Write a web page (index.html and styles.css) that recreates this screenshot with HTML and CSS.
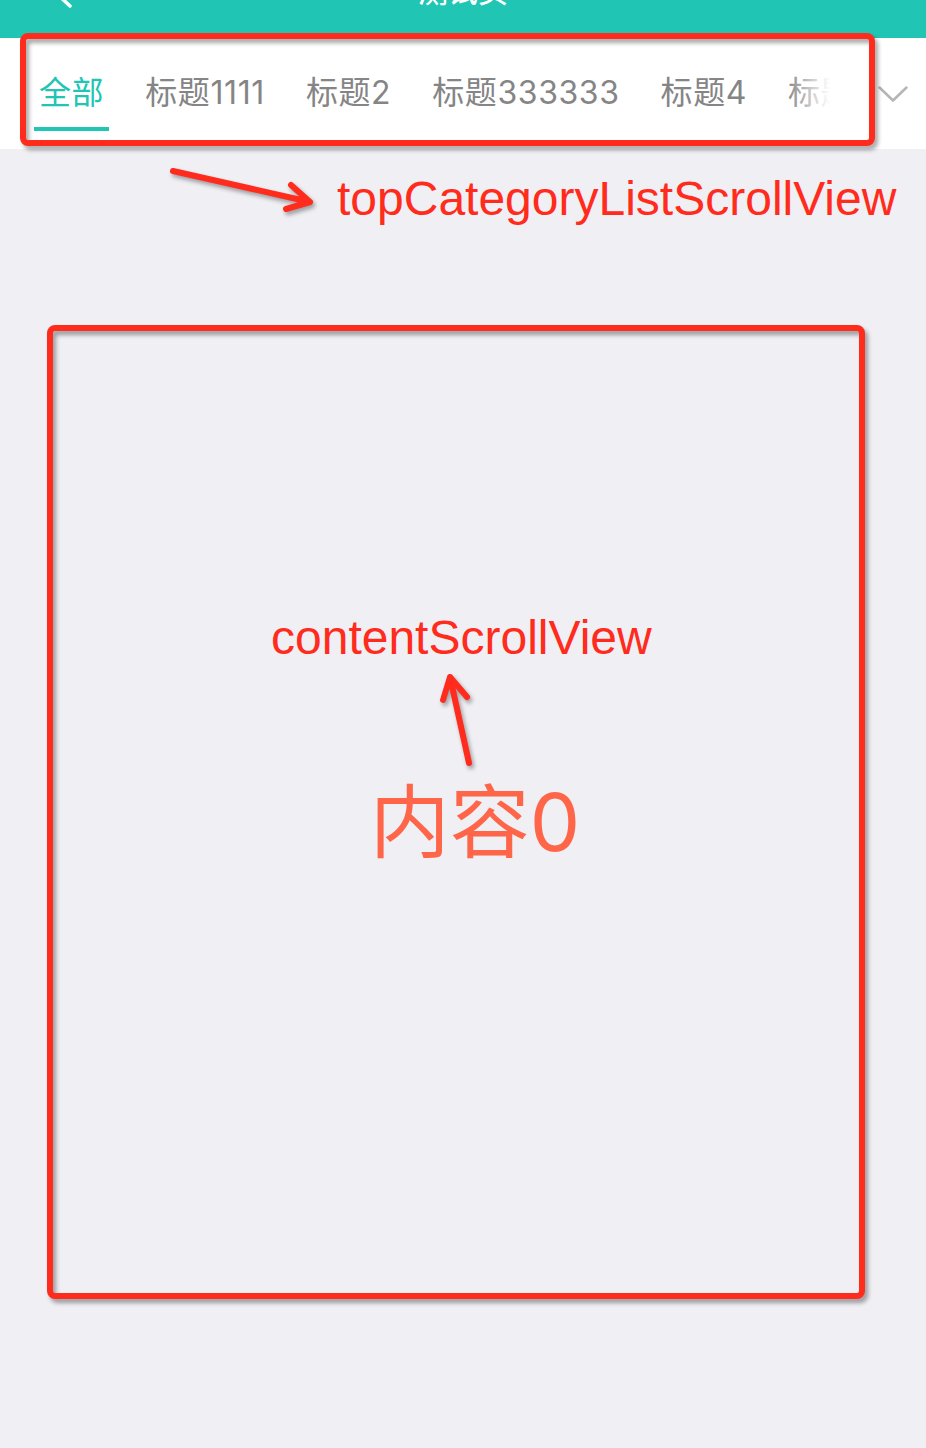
FILE: index.html
```html
<!DOCTYPE html>
<html lang="zh-CN">
<head>
    <meta charset="UTF-8">
    <meta name="viewport" content="width=device-width, initial-scale=1.0">
    <title>分类列表</title>
    <link rel="stylesheet" href="styles.css">
</head>
<body>
    <div class="screen">
        <!-- 导航栏 -->
        <header class="navbar">
            <span class="nav-back">
                <svg width="24" height="30" viewBox="0 0 24 30"><path d="M20 2 L6 15 L20 28" fill="none" stroke="#fff" stroke-width="3.5" stroke-linecap="round" stroke-linejoin="round"/></svg>
            </span>
            <h1 class="nav-title">测试页</h1>
            <span class="nav-side"></span>
        </header>

        <!-- 顶部分类 -->
        <nav class="category-bar">
            <div class="category-list">
                <a class="category active">全部</a>
                <a class="category">标题1111</a>
                <a class="category">标题2</a>
                <a class="category">标题333333</a>
                <a class="category">标题4</a>
                <a class="category">标题5</a>
                <a class="category">标题6</a>
            </div>
            <button class="category-more" type="button">
                <svg width="30" height="16" viewBox="0 0 30 16"><path d="M1.5 1.5 L15 14.5 L28.5 1.5" fill="none" stroke="#b5b5b5" stroke-width="2.5" stroke-linecap="round" stroke-linejoin="round"/></svg>
            </button>
        </nav>

        <!-- 内容 -->
        <main class="content">
            <p class="content-label">内容0</p>
        </main>

        <!-- 标注 -->
        <div class="notes">
            <div class="note-box note-box-top"></div>
            <div class="note-box note-box-content"></div>
            <svg class="note-arrows" width="926" height="1448" viewBox="0 0 926 1448">
                <path d="M173 171 L310 202 M291 185 L310 202 L286 209" />
                <path d="M469 763 L450 677 M443 700 L450 677 L467 697" />
            </svg>
            <span class="note-text note-text-top">topCategoryListScrollView</span>
            <span class="note-text note-text-content">contentScrollView</span>
        </div>
    </div>
</body>
</html>
```

FILE: styles.css
```css
/* 基础 */
body {
    margin: 0;
    background-color: #efeff4;
    font-family: Inter, "Noto Sans CJK SC", sans-serif;
}

.screen {
    position: relative;
    display: flex;
    flex-direction: column;
    width: 926px;
    height: 1448px;
    overflow: hidden;
}

/* 导航栏 */
.navbar {
    display: grid;
    grid-template-columns: 1fr auto 1fr;
    grid-template-rows: 100%;
    align-items: end;
    flex-shrink: 0;
    height: 38px;
    padding-bottom: 32px;
    box-sizing: border-box;
    overflow: hidden;
    background-color: #21c5b3;
    color: #fff;
}

.nav-back {
    display: flex;
    padding-left: 50px;
}

.nav-back svg {
    margin-bottom: -2px;
}

.nav-title {
    margin: 0;
    font-size: 30px;
    font-weight: 500;
    line-height: 1;
    white-space: nowrap;
}

/* 顶部分类 */
.category-bar {
    display: flex;
    flex-shrink: 0;
    height: 111px;
    background-color: #fff;
}

.category-list {
    position: relative;
    display: flex;
    align-items: flex-start;
    gap: 31px;
    flex: 1;
    min-width: 0;
    padding-left: 34px;
    overflow: hidden;
}

.category-list::after {
    content: "";
    position: absolute;
    top: 0;
    right: 0;
    bottom: 0;
    width: 44px;
    background: linear-gradient(to right, rgba(255, 255, 255, 0), #fff);
}

.category {
    flex-shrink: 0;
    padding: 39px 5px 18px;
    border-bottom: 4px solid transparent;
    font-size: 32px;
    line-height: 32px;
    letter-spacing: 0.6px;
    color: #858585;
    white-space: nowrap;
}

.category.active {
    color: #21c5b3;
    border-bottom-color: #21c5b3;
}

.category-more {
    display: flex;
    align-items: center;
    justify-content: flex-end;
    width: 96px;
    padding: 0 18px 0 0;
    border: none;
    background-color: #fff;
}

/* 内容 */
.content {
    display: flex;
    justify-content: center;
    flex: 1;
    padding: 633px 0 0 24px;
}

.content-label {
    margin: 0;
    font-size: 80px;
    line-height: 1;
    color: #ff6649;
}

/* 标注 */
.notes {
    position: absolute;
    inset: 0;
    pointer-events: none;
}

.note-box {
    position: absolute;
    border: 6px solid #ff2b1c;
    border-radius: 8px;
    box-sizing: border-box;
    filter: drop-shadow(3px 4px 2px rgba(0, 0, 0, 0.35));
}

.note-box-top {
    left: 20px;
    top: 33px;
    width: 855px;
    height: 113px;
}

.note-box-content {
    left: 47px;
    top: 325px;
    width: 818px;
    height: 974px;
}

.note-arrows {
    position: absolute;
    left: 0;
    top: 0;
    filter: drop-shadow(2px 3px 2px rgba(0, 0, 0, 0.35));
}

.note-arrows path {
    fill: none;
    stroke: #ff2b1c;
    stroke-width: 6;
    stroke-linecap: round;
    stroke-linejoin: round;
}

.note-text {
    position: absolute;
    font-family: "Liberation Sans", Arial, sans-serif;
    font-size: 48px;
    line-height: 1;
    color: #ff2b1c;
    white-space: nowrap;
}

.note-text-top {
    left: 337px;
    top: 175px;
}

.note-text-content {
    left: 271px;
    top: 614px;
}
```
